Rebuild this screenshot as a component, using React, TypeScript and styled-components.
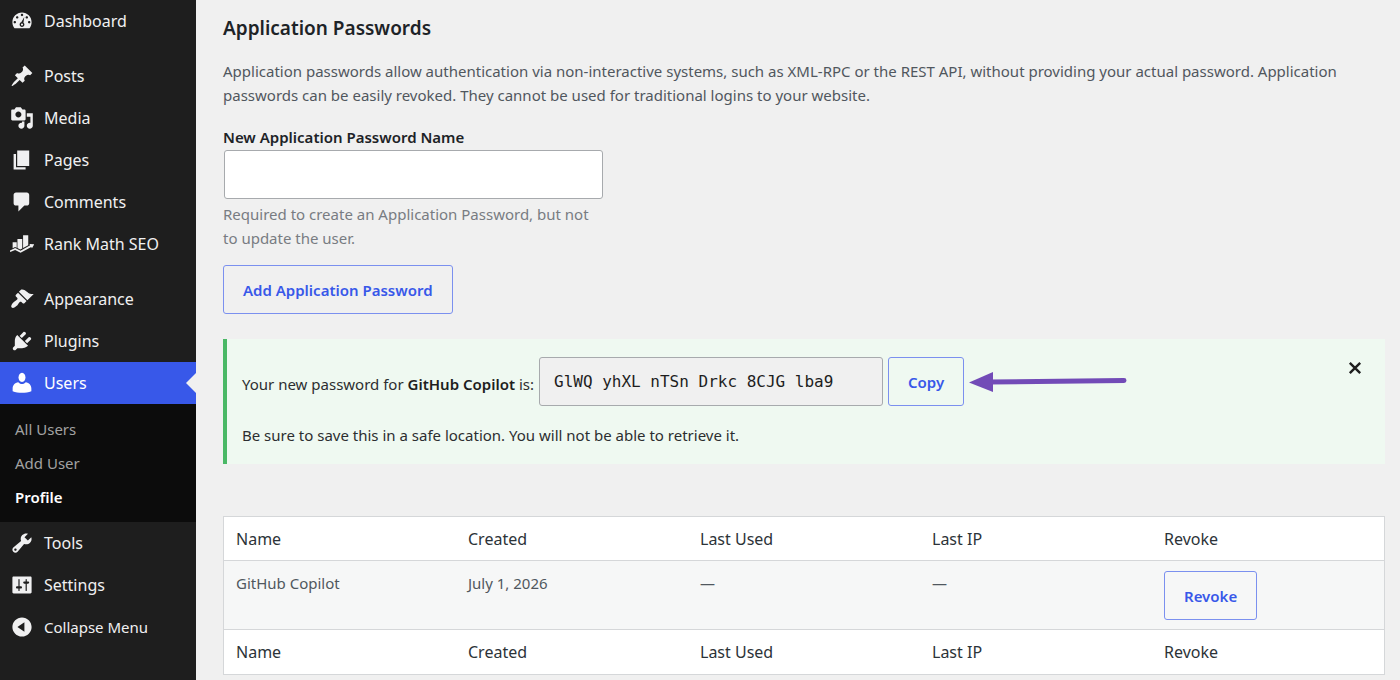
import React from "react";
import styled, { createGlobalStyle, css } from "styled-components";

const GlobalStyle = createGlobalStyle`
  *, *::before, *::after { box-sizing: border-box; }
  body {
    margin: 0;
    background: #f0f0f0;
    color: #3c434a;
    font: 15px/24px "Noto Sans", "Open Sans", sans-serif;
  }
  p, h2, ul { margin: 0; padding: 0; }
  button, input { font-family: inherit; }
`;

const Page = styled.div`
  display: flex;
  height: 100vh;
  overflow: hidden;
`;

const Sidebar = styled.nav`
  flex: none;
  width: 196px;
  background: #1e1e1e;
`;

const MenuGroup = styled.ul`
  list-style: none;
  & + & { margin-top: 13px; }
`;

const itemStyle = css`
  position: relative;
  display: flex;
  align-items: center;
  gap: 10px;
  width: 100%;
  height: 42px;
  padding: 0 0 0 10px;
  border: 0;
  color: #f0f0f1;
  font-size: 16px;
  line-height: 24px;
  text-decoration: none;
  cursor: pointer;
`;

const MenuLink = styled.a<{ $current?: boolean }>`
  ${itemStyle}
  background: ${(p) => (p.$current ? "#3858e9" : "transparent")};
  ${(p) =>
    p.$current &&
    css`
      color: #fff;
      &::after {
        content: "";
        position: absolute;
        top: 50%;
        right: 0;
        margin-top: -10px;
        border: 10px solid transparent;
        border-left: 0;
        border-right-color: #f0f0f0;
      }
    `}
`;

const CollapseButton = styled.button`
  ${itemStyle}
  background: transparent;
  font-size: 15px;
`;

const Glyph = styled.svg`
  flex: none;
  width: 24px;
  height: 24px;
  fill: currentColor;
`;

const Submenu = styled.ul`
  list-style: none;
  padding: 8px 0;
  background: #0c0c0c;
`;

const SubmenuLink = styled.a<{ $current?: boolean }>`
  display: block;
  padding: 5px 15px;
  color: ${(p) => (p.$current ? "#fff" : "#a2a2a2")};
  font-weight: ${(p) => (p.$current ? 600 : 400)};
  text-decoration: none;
`;

const Main = styled.main`
  flex: 1;
  min-width: 0;
  padding: 16px 15px 0 27px;
`;

const Heading = styled.h2`
  margin-bottom: 19px;
  color: #1d2327;
  font-size: 19px;
  line-height: 24px;
  font-weight: 600;
`;

const Intro = styled.p`
  color: #50575e;
`;

const Field = styled.div`
  display: flex;
  flex-direction: column;
  width: 380px;
  margin: 18px 0 15px;
`;

const Label = styled.label`
  margin-bottom: 1px;
  color: #1d2327;
  font-weight: 600;
`;

const inputStyle = css`
  height: 49px;
  padding: 0 14px;
  border: 1px solid #a7aaad;
  border-radius: 3px;
  font-size: 16px;
`;

const NameInput = styled.input`
  ${inputStyle}
  margin: 0 0 3px 1px;
  background: #fff;
  color: #2c3338;
`;

const PasswordInput = styled.input`
  ${inputStyle}
  width: 344px;
  background: #f0f0f0;
  color: #1e1e1e;
  font-family: "DejaVu Sans Mono", monospace;
`;

const Hint = styled.p`
  color: #787c82;
`;

const OutlineButton = styled.button`
  height: 49px;
  padding: 0 19px;
  border: 1px solid #7b90ef;
  border-radius: 3px;
  background: transparent;
  color: #3858e9;
  font-size: 15px;
  line-height: 24px;
  font-weight: 600;
  cursor: pointer;
`;

const Notice = styled.section`
  position: relative;
  margin: 25px 0 52px;
  padding: 18px 15px 17px;
  border-left: 4px solid #4ab866;
  background: #eff9f1;
  color: #2c2e30;
  strong { color: #1e1e1e; font-weight: 600; }
`;

const PasswordRow = styled.div`
  display: flex;
  align-items: center;
  gap: 5px;
  margin-bottom: 17px;
`;

const PasswordLabel = styled.label`
  padding-top: 4px;
`;

const Dismiss = styled.button`
  position: absolute;
  top: 17px;
  right: 18px;
  display: flex;
  padding: 4px;
  border: 0;
  background: transparent;
  color: #1e1e1e;
  cursor: pointer;
`;

const CrossIcon = styled.svg`
  width: 16px;
  height: 16px;
  fill: none;
  stroke: currentColor;
  stroke-width: 2.4;
`;

const ArrowIcon = styled.svg`
  width: 158px;
  height: 24px;
`;

const Table = styled.table`
  width: 100%;
  table-layout: fixed;
  border-collapse: separate;
  border-spacing: 0;
  border: 1px solid #d5d7d9;
  background: #fff;
  th, td {
    padding: 10px 12px 9px;
    text-align: left;
    vertical-align: top;
    font-weight: 400;
  }
  th { color: #2c3338; font-size: 16px; }
  td { color: #50575e; }
  thead th { border-bottom: 1px solid #d5d7d9; }
  tfoot th { padding-bottom: 10px; border-top: 1px solid #d5d7d9; }
  tbody { background: #f6f7f7; }
  button { display: block; }
`;

const icons: Record<string, React.ReactNode> = {
  dashboard: (
    <path
      fillRule="evenodd"
      d="M3.76 16h12.48c1.1-1.37 1.76-3.11 1.76-5 0-4.42-3.58-8-8-8s-8 3.58-8 8c0 1.89.66 3.63 1.76 5zM10 4c.55 0 1 .45 1 1s-.45 1-1 1-1-.45-1-1 .45-1 1-1zM6 6c.55 0 1 .45 1 1s-.45 1-1 1-1-.45-1-1 .45-1 1-1zm8 0c.55 0 1 .45 1 1s-.45 1-1 1-1-.45-1-1 .45-1 1-1zM4 10c.55 0 1 .45 1 1s-.45 1-1 1-1-.45-1-1 .45-1 1-1zm12 0c.55 0 1 .45 1 1s-.45 1-1 1-1-.45-1-1 .45-1 1-1zM11.9 6.6L11.2 11.4C11.8 11.8 12 12.4 12 13c0 1.1-.9 2-2 2s-2-.9-2-2c0-.9.6-1.6 1.4-1.9zM10 12.100a.9.9 0 1 0 0 1.800.9.9 0 0 0 0-1.800z"
    />
  ),
  posts: (
    <path d="M10.44 3.02l1.82-1.82 6.36 6.35-1.83 1.82c-1.05-.68-2.48-.57-3.41.36l-.75.75c-.92.93-1.04 2.35-.35 3.41l-1.83 1.82-2.41-2.41-2.8 2.79c-.42.42-3.38 2.71-3.8 2.29s1.86-3.39 2.28-3.81l2.79-2.79L4.1 9.36l1.83-1.82c1.05.69 2.48.57 3.4-.36l.75-.75c.93-.92 1.05-2.35.36-3.41z" />
  ),
  media: (
    <path
      fillRule="evenodd"
      d="M13 11V4c0-.55-.45-1-1-1h-1.67L9 1H5L3.67 3H2c-.55 0-1 .45-1 1v7c0 .55.45 1 1 1h10c.55 0 1-.45 1-1zM7 4.5c1.38 0 2.5 1.12 2.5 2.5S8.38 9.5 7 9.5 4.5 8.38 4.5 7 5.62 4.5 7 4.5zM14 6h5v10.5c0 1.38-1.12 2.5-2.5 2.5S14 17.88 14 16.5s1.12-2.5 2.5-2.5c.17 0 .34.02.5.05V9h-3V6zm-4 8.05V13h2v3.5c0 1.38-1.12 2.5-2.5 2.5S7 17.88 7 16.5 8.12 14 9.5 14c.17 0 .34.02.5.05z"
    />
  ),
  pages: <path d="M6 15V2h10v13H6zm-1 1h8v2H3V5h2v11z" />,
  comments: (
    <path d="M5 2h9c1.1 0 2 .9 2 2v7c0 1.1-.9 2-2 2h-2l-5 5v-5H5c-1.1 0-2-.9-2-2V4c0-1.1.9-2 2-2z" />
  ),
  rankMath: (
    <>
      <path d="M2.2 8.6h3.4v4.6l-1.4-.8-2 1.200zM6.200 5.800h4v7.900l-1.700.9-2.300-1.300zM10.900 2.800h4.300v8.200l-4.300 2.400z" />
      <path d="M-.2 15.600l4.500-2.300 4.500 2.300 8-4.500-.6-1 4 .1-1.900 3.300-.6-1-8.900 4.700-4.500-2.300-4.100 1.700z" />
    </>
  ),
  appearance: (
    <path d="M14.48 11.06L7.41 3.99l1.5-1.5c.5-.56 2.3-.47 3.51.32 1.21.8 1.43 1.28 2.91 2.1 1.18.64 2.45 1.26 4.45.85zm-.71.71L6.7 4.7 4.93 6.47c-.39.39-.39 1.02 0 1.41l1.06 1.06c.39.39.39 1.03 0 1.42-.6.6-1.43 1.11-2.21 1.69-.35.26-.7.53-1.01.84C1.43 14.23.4 16.08 1.4 17.07c.99 1 2.84-.03 4.18-1.36.31-.31.58-.66.85-1.02.57-.78 1.08-1.61 1.69-2.21.39-.39 1.02-.39 1.41 0l1.06 1.06c.39.39 1.02.39 1.41 0z" />
  ),
  plugins: (
    <path d="M13.11 4.36L9.87 7.6 8 5.73l3.24-3.24c.35-.34 1.05-.2 1.56.32.52.51.66 1.21.31 1.55zm-8 1.77l.91-1.12 9.01 9.01-1.19.84c-.71.71-2.63 1.16-3.82 1.16H6.14L4.9 17.26c-.59.59-1.54.59-2.12 0-.59-.58-.59-1.53 0-2.12l1.24-1.24v-3.88c0-1.13.4-3.19 1.09-3.89zm7.26 3.97l3.24-3.24c.34-.35 1.04-.21 1.55.31.52.51.66 1.21.31 1.55l-3.24 3.25z" />
  ),
  users: (
    <>
      <path d="M10 9.100c-2 0-2.900-2-2.900-3.600C7.100 3.300 8.200 1.500 10 1.500s2.900 1.800 2.900 4c0 1.600-.9 3.600-2.900 3.600z" />
      <path d="M6.900 9.300c.8 1 1.800 1.500 3.100 1.500s2.300-.5 3.100-1.500c2.800.3 4.700 2.400 4.700 5.200v2.300c-2.400.9-5 1.300-7.800 1.300s-5.400-.4-7.800-1.300v-2.300c0-2.800 1.900-4.900 4.700-5.200z" />
    </>
  ),
  tools: (
    <path
      fillRule="evenodd"
      d="M16.68 9.77c-1.34 1.34-3.3 1.67-4.95.99l-5.41 6.52c-.99.99-2.59.99-3.58 0s-.99-2.59 0-3.57l6.52-5.42c-.68-1.65-.35-3.61.99-4.95 1.28-1.28 3.12-1.62 4.72-1.06l-2.89 2.89 2.82 2.82 2.86-2.87c.53 1.58.18 3.39-1.08 4.65zM3.81 16.21c.4.39 1.04.39 1.43 0 .4-.4.4-1.04 0-1.43-.39-.4-1.03-.4-1.43 0-.39.39-.39 1.03 0 1.43z"
    />
  ),
  settings: (
    <path
      fillRule="evenodd"
      d="M18 16V4c0-.55-.45-1-1-1H3c-.55 0-1 .45-1 1v12c0 .55.45 1 1 1h14c.55 0 1-.45 1-1zM8 11h1c.55 0 1 .45 1 1s-.45 1-1 1H8v1.5c0 .28-.22.5-.5.5s-.5-.22-.5-.5V13H6c-.55 0-1-.45-1-1s.45-1 1-1h1V5.5c0-.28.22-.5.5-.5s.5.22.5.5V11zm5-2h-1c-.55 0-1-.45-1-1s.45-1 1-1h1V5.5c0-.28.22-.5.5-.5s.5.22.5.5V7h1c.55 0 1 .45 1 1s-.45 1-1 1h-1v5.5c0 .28-.22.5-.5.5s-.5-.22-.5-.5V9z"
    />
  ),
  collapse: (
    <path
      fillRule="evenodd"
      d="M10 2c4.42 0 8 3.58 8 8s-3.58 8-8 8-8-3.58-8-8 3.58-8 8-8zm2 11.88V6.12L6.18 9.97z"
    />
  ),
};

function Icon({ name }: { name: string }) {
  return (
    <Glyph viewBox="0 0 20 20" aria-hidden="true">
      {icons[name]}
    </Glyph>
  );
}

function MenuItem({
  icon,
  label,
  current,
  children,
}: {
  icon: string;
  label: string;
  current?: boolean;
  children?: React.ReactNode;
}) {
  return (
    <li>
      <MenuLink href="#" $current={current}>
        <Icon name={icon} />
        {label}
      </MenuLink>
      {children}
    </li>
  );
}

const columns = ["Name", "Created", "Last Used", "Last IP", "Revoke"];

function ColumnNames() {
  return (
    <tr>
      {columns.map((name) => (
        <th key={name} scope="col">
          {name}
        </th>
      ))}
    </tr>
  );
}

export default function App() {
  return (
    <Page>
      <GlobalStyle />
      <Sidebar aria-label="Main menu">
        <MenuGroup>
          <MenuItem icon="dashboard" label="Dashboard" />
        </MenuGroup>
        <MenuGroup>
          <MenuItem icon="posts" label="Posts" />
          <MenuItem icon="media" label="Media" />
          <MenuItem icon="pages" label="Pages" />
          <MenuItem icon="comments" label="Comments" />
          <MenuItem icon="rankMath" label="Rank Math SEO" />
        </MenuGroup>
        <MenuGroup>
          <MenuItem icon="appearance" label="Appearance" />
          <MenuItem icon="plugins" label="Plugins" />
          <MenuItem icon="users" label="Users" current>
            <Submenu>
              <li><SubmenuLink href="#">All Users</SubmenuLink></li>
              <li><SubmenuLink href="#">Add User</SubmenuLink></li>
              <li><SubmenuLink href="#" $current>Profile</SubmenuLink></li>
            </Submenu>
          </MenuItem>
          <MenuItem icon="tools" label="Tools" />
          <MenuItem icon="settings" label="Settings" />
          <li>
            <CollapseButton type="button">
              <Icon name="collapse" />
              Collapse Menu
            </CollapseButton>
          </li>
        </MenuGroup>
      </Sidebar>
      <Main>
        <Heading>Application Passwords</Heading>
        <Intro>
          Application passwords allow authentication via non-interactive systems, such as XML-RPC
          or the REST API, without providing your actual password. Application passwords can be
          easily revoked. They cannot be used for traditional logins to your website.
        </Intro>
        <Field>
          <Label htmlFor="password-name">New Application Password Name</Label>
          <NameInput id="password-name" type="text" aria-describedby="password-hint" />
          <Hint id="password-hint">
            Required to create an Application Password, but not to update the user.
          </Hint>
        </Field>
        <OutlineButton type="button">Add Application Password</OutlineButton>
        <Notice role="alert">
          <PasswordRow>
            <PasswordLabel htmlFor="new-password">
              Your new password for <strong>GitHub Copilot</strong> is:
            </PasswordLabel>
            <PasswordInput
              id="new-password"
              type="text"
              readOnly
              defaultValue="GlWQ yhXL nTSn Drkc 8CJG lba9"
            />
            <OutlineButton type="button">Copy</OutlineButton>
            <ArrowIcon viewBox="0 0 158 24" aria-hidden="true">
              <path d="M20 12L155 10.500" stroke="#724bb7" strokeWidth="5" strokeLinecap="round" />
              <path d="M0 12.500L24 2v20z" fill="#724bb7" />
            </ArrowIcon>
          </PasswordRow>
          <p>Be sure to save this in a safe location. You will not be able to retrieve it.</p>
          <Dismiss type="button" aria-label="Dismiss this notice">
            <CrossIcon viewBox="0 0 16 16" aria-hidden="true">
              <path d="M2.800 2.800l10.400 10.400M13.200 2.800l-10.400 10.400" />
            </CrossIcon>
          </Dismiss>
        </Notice>
        <Table>
          <thead><ColumnNames /></thead>
          <tbody>
            <tr>
              <td>GitHub Copilot</td>
              <td>July 1, 2026</td>
              <td>—</td>
              <td>—</td>
              <td><OutlineButton type="button">Revoke</OutlineButton></td>
            </tr>
          </tbody>
          <tfoot><ColumnNames /></tfoot>
        </Table>
      </Main>
    </Page>
  );
}
